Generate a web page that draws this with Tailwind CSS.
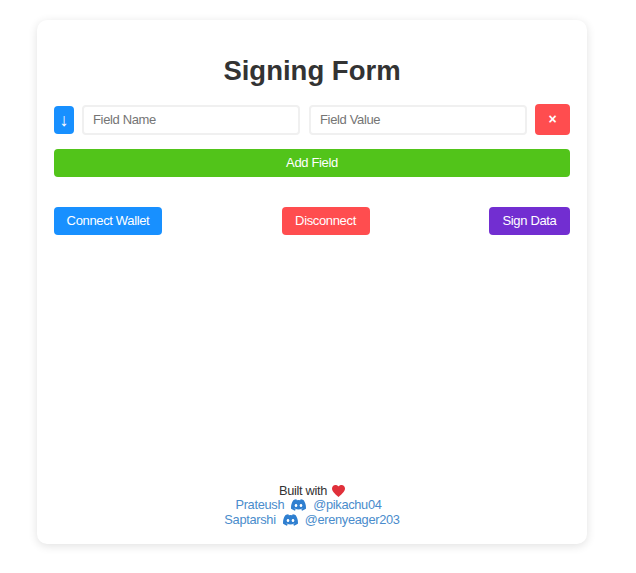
<!DOCTYPE html>
<html lang="en">
<head>
  <meta charset="UTF-8" />
  <title>Signing Form</title>
  <script src="https://cdn.jsdelivr.net/npm/@tailwindcss/browser@4"></script>
</head>
<body class="bg-white min-h-screen font-['Liberation_Sans',Arial,sans-serif]">
  <div class="w-[550px] h-[524px] ml-[37px] mr-auto relative top-[20px] bg-white rounded-[10px] shadow-[0_2px_10px_rgba(0,0,0,0.12)] px-[17px] flex flex-col">
    <h1 class="mt-[35px] text-center text-[27.5px] leading-[32px] font-bold text-[#333333]">Signing Form</h1>

    <!-- Field row -->
    <div class="flex items-center h-[31px] mt-[17px]">
      <button class="w-[20px] h-[28px] rounded bg-[#1890ff] text-white text-[18px] leading-none flex items-center justify-center">↓</button>
      <input type="text" placeholder="Field Name" class="ml-[8px] w-[218px] h-[30px] px-[9px] rounded border-2 border-[#f0f0f0] text-[13px] tracking-[-0.35px] placeholder:text-[#757575]" />
      <input type="text" placeholder="Field Value" class="ml-[9px] w-[218px] h-[30px] px-[9px] rounded border-2 border-[#f0f0f0] text-[13px] tracking-[-0.35px] placeholder:text-[#757575]" />
      <button class="ml-[8px] w-[35px] h-[31px] rounded bg-[#ff4d4f] text-white text-[14px] font-bold flex items-center justify-center">×</button>
    </div>

    <button class="mt-[14px] w-full h-[28px] rounded bg-[#52c41a] text-white text-[13px] tracking-[-0.35px]">Add Field</button>

    <div class="flex justify-between mt-[30px]">
      <button class="w-[108px] h-[28px] rounded bg-[#1890ff] text-white text-[13px] tracking-[-0.35px]">Connect Wallet</button>
      <button class="w-[88px] h-[28px] rounded bg-[#ff4d4f] text-white text-[13px] tracking-[-0.35px]">Disconnect</button>
      <button class="w-[81px] h-[28px] rounded bg-[#722ed1] text-white text-[13px] tracking-[-0.35px]">Sign Data</button>
    </div>

    <!-- Footer -->
    <div class="mt-auto mb-[17px] text-center text-[12.8px] tracking-[-0.3px] leading-[14.5px]">
      <div class="text-[#333333] flex items-center justify-center gap-[5px]">
        Built with
        <svg class="w-[13px] h-[12px]" viewBox="0 0 24 22"><path fill="#e0303a" d="M12 22C5 16 0 12 0 6.500 0 2.800 2.800 0 6.400 0 8.600 0 10.700 1 12 2.800 13.300 1 15.400 0 17.600 0 21.200 0 24 2.800 24 6.500 24 12 19 16 12 22z"/></svg>
      </div>
      <div class="text-[#4a8ccc] flex items-center justify-center mr-[7px]">
        Prateush
        <svg class="w-[15px] h-[12px] mx-[7px]" viewBox="0 0 127 96"><path fill="#2f7fd0" d="M107.700 8A105 105 0 0 0 81.500 0c-1.100 2-2.400 4.700-3.300 6.900a97.700 97.700 0 0 0-29.100 0C48.100 4.700 46.800 2 45.700 0a105 105 0 0 0-26.200 8C2.900 32.600-1.600 56.600.6 80.300A105.700 105.700 0 0 0 32.800 96.500c2.600-3.500 4.900-7.200 6.900-11.100-3.800-1.400-7.400-3.200-10.800-5.200.9-.7 1.800-1.400 2.600-2.100 20.800 9.500 43.400 9.500 64 0 .9.700 1.700 1.400 2.600 2.100-3.400 2-7.100 3.800-10.900 5.200 2 3.900 4.300 7.600 6.900 11.100a105.300 105.300 0 0 0 32.200-16.200c2.600-27.500-4.500-51.300-18.600-72.300zM42.500 65.700c-6.300 0-11.400-5.700-11.400-12.800s5-12.800 11.400-12.800 11.500 5.800 11.400 12.800-5 12.800-11.400 12.800zm42.200 0c-6.300 0-11.400-5.700-11.400-12.800s5-12.800 11.400-12.800 11.500 5.800 11.400 12.800-5 12.800-11.400 12.800z"/></svg>
        @pikachu04
      </div>
      <div class="text-[#4a8ccc] flex items-center justify-center">
        Saptarshi
        <svg class="w-[15px] h-[12px] mx-[7px]" viewBox="0 0 127 96"><path fill="#2f7fd0" d="M107.700 8A105 105 0 0 0 81.500 0c-1.100 2-2.400 4.700-3.300 6.900a97.700 97.700 0 0 0-29.100 0C48.100 4.700 46.800 2 45.700 0a105 105 0 0 0-26.200 8C2.900 32.600-1.600 56.600.6 80.300A105.700 105.700 0 0 0 32.800 96.500c2.600-3.500 4.900-7.200 6.900-11.100-3.800-1.400-7.400-3.200-10.800-5.200.9-.7 1.800-1.400 2.600-2.100 20.800 9.500 43.400 9.500 64 0 .9.700 1.700 1.400 2.600 2.100-3.400 2-7.100 3.800-10.900 5.200 2 3.900 4.300 7.600 6.900 11.100a105.300 105.300 0 0 0 32.200-16.200c2.600-27.500-4.500-51.300-18.600-72.300zM42.500 65.700c-6.300 0-11.400-5.700-11.400-12.800s5-12.800 11.400-12.800 11.500 5.800 11.400 12.800-5 12.800-11.400 12.800zm42.200 0c-6.300 0-11.400-5.700-11.400-12.800s5-12.800 11.400-12.800 11.500 5.800 11.400 12.800-5 12.800-11.400 12.800z"/></svg>
        @erenyeager203
      </div>
    </div>
  </div>
</body>
</html>
